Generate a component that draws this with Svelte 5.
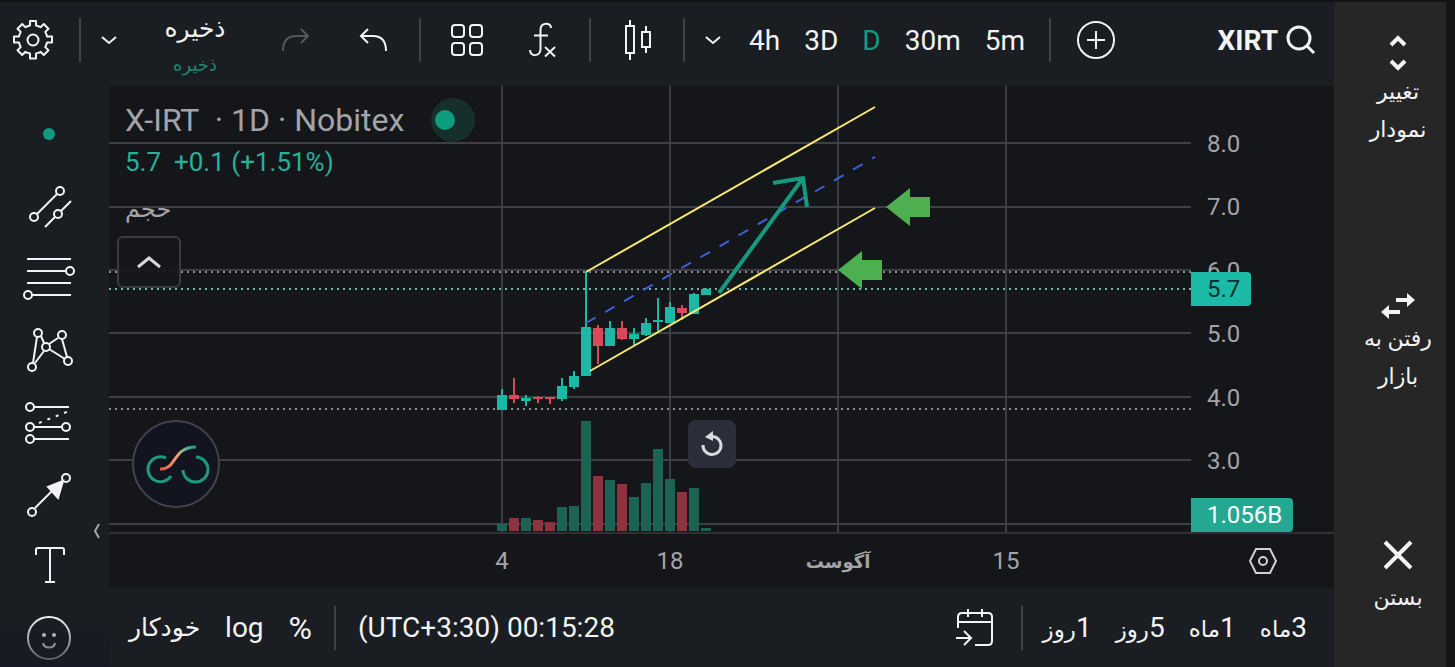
<script>
  const intervals = ['4h', '3D', 'D', '30m', '5m'];
  let activeInterval = $state('D');

  const ranges = [
    { count: 1, unit: 'روز' },
    { count: 5, unit: 'روز' },
    { count: 1, unit: 'ماه' },
    { count: 3, unit: 'ماه' }
  ];
  const prices = ['8.0', '7.0', '6.0', '5.0', '4.0', '3.0'];
  const dates = [
    { label: '4' },
    { label: '18' },
    { label: 'آگوست', month: true },
    { label: '15' }
  ];

  const gridRows = [57, 121, 184, 247, 311, 374, 438];
  const gridCols = [393, 561, 729, 897];

  // [high, body top, body bottom, low, volume top, rising]
  const candles = [
    [303, 309, 324, 324, 438, true],
    [292, 309, 313, 317, 432, false],
    [309, 312, 315, 320, 432, true],
    [310, 311, 313, 317, 434, false],
    [311, 311, 313, 318, 436, false],
    [292, 300, 313, 315, 421, true],
    [285, 290, 301, 303, 420, true],
    [186, 241, 290, 290, 335, true],
    [239, 242, 260, 278, 390, false],
    [235, 242, 260, 260, 394, true],
    [235, 242, 253, 254, 398, false],
    [242, 248, 253, 259, 411, true],
    [232, 237, 249, 250, 397, true],
    [212, 234, 236, 245, 363, true],
    [216, 221, 237, 237, 393, true],
    [219, 222, 227, 234, 406, false],
    [207, 208, 228, 228, 402, true],
    [202, 203, 209, 209, 442, true]
  ];

  let legendOpen = $state(true);
</script>

<div class="app">
  <main>
    <header>
      <button class="settings" aria-label="Settings">
        <svg width="44" height="44" viewBox="0 0 44 44">
          <path d="M19 3h6v4.500q2.500.500 4.600 1.700l3.200-3.200 4.700 4.700-3.200 3.200q1.200 2.100 1.700 4.600h5v6h-5q-.500 2.500-1.700 4.600l3.200 3.200-4.700 4.700-3.200-3.200q-2.100 1.200-4.600 1.700v5h-6v-5q-2.500-.500-4.600-1.700l-3.200 3.200-4.700-4.700 3.200-3.200q-1.200-2.100-1.700-4.600h-5v-6h5q.500-2.500 1.700-4.600l-3.200-3.200 4.700-4.700 3.200 3.200q2.100-1.200 4.600-1.700z" />
          <circle cx="22" cy="22" r="5.500" />
        </svg>
      </button>
      <span class="divider"></span>
      <button class="chevron" aria-label="Layouts">
        <svg width="18" height="10" viewBox="0 0 18 10"><path d="M2 2l7 6 7-6" /></svg>
      </button>
      <button class="save">
        <span>ذخیره</span>
        <small>ذخیره</small>
      </button>
      <button class="redo" aria-label="Redo" disabled>
        <svg width="30" height="24" viewBox="0 0 30 24"><path d="M2 23C2 13 7 8 15 8h12M20 1l7 7-7 7" /></svg>
      </button>
      <button class="undo" aria-label="Undo">
        <svg width="30" height="24" viewBox="0 0 30 24"><path d="M28 23C28 13 23 8 15 8H3M10 1L3 8l7 7" /></svg>
      </button>
      <span class="divider"></span>
      <button class="layout" aria-label="Templates">
        <svg width="34" height="34" viewBox="0 0 34 34">
          <rect x="2" y="2" width="12" height="12" rx="3" />
          <rect x="20" y="2" width="12" height="12" rx="3" />
          <rect x="2" y="20" width="12" height="12" rx="3" />
          <rect x="20" y="20" width="12" height="12" rx="3" />
        </svg>
      </button>
      <button class="indicators" aria-label="Indicators">
        <svg width="30" height="36" viewBox="0 0 30 36">
          <path d="M23 6C23 0 12.500 0 12.500 8v19c0 8-10.500 8-10.500 1M6 13.500h14M17 25l10 9.500M27 25l-10 9.500" />
        </svg>
      </button>
      <span class="divider"></span>
      <button class="candle-type" aria-label="Candles">
        <svg width="30" height="42" viewBox="0 0 30 42">
          <path d="M4 7h8v27H4zM8 1v6M8 34v7M20 13h8v15h-8zM24 7v6M24 28v6" />
        </svg>
      </button>
      <span class="divider"></span>
      <button class="chevron" aria-label="Intervals">
        <svg width="18" height="10" viewBox="0 0 18 10"><path d="M2 2l7 6 7-6" /></svg>
      </button>
      <div class="intervals">
        {#each intervals as interval}
          <button class:active={interval === activeInterval} onclick={() => (activeInterval = interval)}>{interval}</button>
        {/each}
      </div>
      <span class="divider"></span>
      <button class="compare" aria-label="Compare">
        <svg width="40" height="40" viewBox="0 0 40 40"><circle cx="20" cy="20" r="18" /><path d="M11 20h18M20 11v18" /></svg>
      </button>
      <button class="symbol">
        XIRT
        <svg width="30" height="30" viewBox="0 0 30 30"><circle cx="13" cy="13" r="11" /><path d="M21 21l7 7" /></svg>
      </button>
    </header>

    <div class="workspace">
      <nav aria-label="Drawing tools">
        <button aria-label="Cursor"><span class="dot"></span></button>
        <button aria-label="Trend lines">
          <svg width="50" height="50" viewBox="0 0 50 50">
            <path d="M13 33l20-20M21 46l10-10M37 30l10-10" />
            <circle cx="36" cy="10" r="4" />
            <circle cx="10" cy="36" r="4" />
            <circle cx="34" cy="33" r="4" />
          </svg>
        </button>
        <button aria-label="Fibonacci">
          <svg width="50" height="50" viewBox="0 0 50 50">
            <path d="M3 6h44M3 18h39M3 30h44M8 42h39" />
            <circle cx="46" cy="18" r="4" /><circle cx="4" cy="42" r="4" />
          </svg>
        </button>
        <button aria-label="Patterns">
          <svg width="50" height="50" viewBox="0 0 50 50">
            <path d="M9 38l4-26M11 38l9-12M17 11l3 7M25 19l9-6M25 24l16 10M38 14l5 18" />
            <circle cx="14" cy="8" r="4" /><circle cx="38" cy="10" r="4" /><circle cx="22" cy="22" r="4" />
            <circle cx="8" cy="42" r="4" /><circle cx="44" cy="36" r="4" />
          </svg>
        </button>
        <button aria-label="Projection">
          <svg width="50" height="50" viewBox="0 0 50 50">
            <path d="M10 10h35M10 30h28M10 42h35" />
            <path d="M15 26l30-12" stroke-dasharray="3 6" />
            <circle cx="6" cy="10" r="4" /><circle cx="6" cy="30" r="4" />
            <circle cx="42" cy="30" r="4" /><circle cx="6" cy="42" r="4" />
          </svg>
        </button>
        <button aria-label="Arrow">
          <svg width="50" height="50" viewBox="0 0 50 50">
            <path d="M11 39l20-20" />
            <path class="solid" d="M24 18l15-6-5 17z" />
            <circle cx="42" cy="9" r="4" /><circle cx="8" cy="43" r="4" />
          </svg>
        </button>
        <button aria-label="Text">
          <svg width="50" height="50" viewBox="0 0 50 50">
            <path d="M12 14V9q0-2 2-2h24q2 0 2 2v5M26 7v34M21 41h10" />
          </svg>
        </button>
        <button aria-label="Emoji">
          <svg width="50" height="50" viewBox="0 0 50 50">
            <circle cx="25" cy="25" r="21" />
            <path d="M19 30c1 6 11 6 12 0" />
            <circle class="solid" cx="20" cy="22" r="1" /><circle class="solid" cx="30" cy="22" r="1" />
          </svg>
        </button>
        <button class="hide-tools" aria-label="Hide tools">
          <svg width="8" height="18" viewBox="0 0 8 18"><path d="M6 2L2 9l4 7" /></svg>
        </button>
      </nav>

      <div class="content">
        <section class="chart">
          <div class="plot">
            <svg class="canvas" viewBox="0 0 1082 446" preserveAspectRatio="xMidYMid slice">
              <g class="grid">
                {#each gridRows as y}
                  <line x1="0" x2="1082" y1={y} y2={y} />
                {/each}
                {#each gridCols as x}
                  <line x1={x} x2={x} y1="0" y2="446" />
                {/each}
              </g>
              {#each candles as [high, top, bottom, low, volume, rising], i}
                <rect class="volume" class:rising x={388 + i * 12} y={volume} width="10" height={445 - volume} />
              {/each}
              <g class="levels">
                <line x1="0" x2="1082" y1="186" y2="186" />
                <line class="last" x1="0" x2="1082" y1="203" y2="203" />
                <line x1="0" x2="1082" y1="323" y2="323" />
              </g>
              {#each candles as [high, top, bottom, low, volume, rising], i}
                <g class="candle" class:rising>
                  <rect x={392 + i * 12} y={high} width="2" height={low - high} />
                  <rect x={388 + i * 12} y={top} width="10" height={bottom - top} />
                </g>
              {/each}
              <g class="channel">
                <path d="M477 186L766 21M481 285L766 122" />
                <path class="middle" d="M477 237L766 71" />
              </g>
              <path class="forecast" d="M610 207L694 92M664 97l30-5 4 29" />
              <g class="marks">
                <path d="M777 121l24-19v9h20v20h-20v9z" />
                <path d="M729 184l24-19v9h20v20h-20v9z" />
              </g>
            </svg>

            <div class="legend">
              <h1>X-IRT &nbsp;· 1D · Nobitex <span class="status"></span></h1>
              <p class="change">5.7 &nbsp;+0.1 (+1.51%)</p>
              <p class="study">حجم</p>
              <button aria-label="Toggle legend" aria-expanded={legendOpen} onclick={() => (legendOpen = !legendOpen)}>
                <svg width="26" height="14" viewBox="0 0 26 14"><path d="M2 12l11-9 11 9" /></svg>
              </button>
            </div>

            <a class="logo" href="#nobitex" aria-label="Nobitex">
              <svg width="84" height="84" viewBox="0 0 84 84">
                <defs>
                  <linearGradient id="wave">
                    <stop offset="0" stop-color="#e0554a" />
                    <stop offset="0.500" stop-color="#f0a070" />
                    <stop offset="0.700" stop-color="#5fb598" />
                    <stop offset="1" stop-color="#189a7c" />
                  </linearGradient>
                </defs>
                <path d="M32 36A12.500 12.500 0 1 0 37 54" />
                <path d="M62 35A12.500 12.500 0 1 1 49 48" />
                <path d="M26 47C43 48 38 25 62 25" stroke="url(#wave)" />
              </svg>
            </a>

            <button class="reset" aria-label="Reset chart">
              <svg width="24" height="28" viewBox="0 0 24 28">
                <path d="M3 15a9 9 0 1 0 9-8.500" />
                <path class="solid" d="M13 1v10L5 7z" />
              </svg>
            </button>
          </div>

          <div class="price-axis">
            {#each prices as price}
              <span>{price}</span>
            {/each}
            <strong class="last-price">5.7</strong>
            <strong class="last-volume">1.056B</strong>
          </div>

          <div class="time-axis">
            {#each dates as date}
              <span class:month={date.month}>{date.label}</span>
            {/each}
          </div>
          <button class="axis-settings" aria-label="Axis settings">
            <svg width="30" height="28" viewBox="0 0 30 28"><path d="M8 2h14l6 12-6 12H8L2 14z" /><circle cx="15" cy="14" r="4" /></svg>
          </button>
        </section>

        <footer>
          <button class="auto">خودکار</button>
          <button>log</button>
          <button class="percent">%</button>
          <span class="divider"></span>
          <button>(UTC+3:30) 00:15:28</button>
          <div class="ranges">
            <button aria-label="Go to date">
              <svg width="40" height="40" viewBox="0 0 40 40">
                <path d="M3 20V9q0-4 4-4h26q4 0 4 4v24q0 4-4 4H20M3 14h34M13 1v8M27 1v8M1 30h15M9 23l7 7-7 7" />
              </svg>
            </button>
            <span class="divider"></span>
            {#each ranges as range}
              <button class="range" dir="rtl">{range.count}<span>{range.unit}</span></button>
            {/each}
          </div>
        </footer>
      </div>
    </div>
  </main>

  <aside>
    <button dir="rtl">
      <svg width="20" height="38" viewBox="0 0 20 38"><path d="M3 10l7-7 7 7M3 26l7 7 7-7" /></svg>
      تغییر نمودار
    </button>
    <button dir="rtl">
      <svg width="36" height="28" viewBox="0 0 36 28">
        <path d="M16 8h12M20 20H8" />
        <path class="solid" d="M27 1l8 7-8 7zM9 13l-8 7 8 7z" />
      </svg>
      رفتن به بازار
    </button>
    <button dir="rtl">
      <svg width="32" height="40" viewBox="0 0 32 40"><path d="M3 3l26 26M29 3L3 29" /></svg>
      بستن
    </button>
  </aside>
</div>

<style>
  :global(body) {
    margin: 0;
    background: #131416;
  }

  .app {
    display: flex;
    box-sizing: border-box;
    height: 100vh;
    min-height: 640px;
    padding: 2px 9px 0 0;
    overflow: hidden;
    color: #f2f3f5;
    font-family: Roboto, 'DejaVu Sans', sans-serif;
    font-size: 28px;
  }

  button {
    display: flex;
    align-items: center;
    justify-content: center;
    flex-shrink: 0;
    padding: 0;
    border: none;
    background: none;
    color: inherit;
    font: inherit;
    white-space: nowrap;
    cursor: pointer;
  }

  svg {
    display: block;
    overflow: visible;
    fill: none;
    stroke: currentColor;
    stroke-width: 2;
  }

  .solid {
    fill: currentColor;
  }

  main {
    display: flex;
    flex-direction: column;
    flex: 1;
    min-width: 0;
    background: #1a1d21;
  }

  header {
    display: flex;
    align-items: center;
    height: 84px;
    padding-bottom: 8px;
    box-sizing: border-box;
  }

  .divider {
    flex-shrink: 0;
    width: 2px;
    height: 44px;
    background: #3f4147;
  }

  .settings {
    width: 66px;
    margin-right: 13px;
  }

  .settings svg {
    stroke-linejoin: round;
  }

  .chevron {
    width: 56px;
  }

  .save {
    flex-direction: column;
    gap: 8px;
    box-sizing: border-box;
    width: 116px;
    height: 76px;
    padding-top: 10px;
    font-size: 25px;
    line-height: 32px;
  }

  .save small {
    color: #168a74;
    font-size: 18px;
    line-height: 24px;
  }

  .redo {
    width: 86px;
    color: #55575c;
  }

  .undo {
    width: 68px;
    margin-right: 12px;
  }

  .layout {
    width: 92px;
  }

  .indicators {
    width: 60px;
    margin-right: 16px;
  }

  .candle-type {
    width: 92px;
  }

  .intervals {
    display: flex;
    gap: 24px;
    padding: 0 24px 0 8px;
  }

  .active {
    color: #109c82;
  }

  .compare {
    width: 90px;
  }

  .symbol {
    gap: 8px;
    margin-left: auto;
    padding-right: 18px;
    font-weight: 700;
  }

  .symbol svg {
    stroke-width: 3;
  }

  .workspace {
    display: flex;
    flex: 1;
    min-height: 0;
  }

  nav {
    position: relative;
    width: 109px;
    padding-top: 12px;
    box-sizing: border-box;
    overflow: hidden;
  }

  nav::after {
    position: absolute;
    inset: auto 0 0;
    height: 50px;
    background: linear-gradient(transparent, #161925cc);
    content: '';
    pointer-events: none;
  }

  nav button {
    width: 98px;
    height: 72px;
  }

  .dot {
    width: 12px;
    height: 12px;
    border-radius: 50%;
    background: #0f9b80;
  }

  .hide-tools {
    position: absolute;
    right: 8px;
    bottom: 124px;
    width: 8px;
    height: 24px;
    color: #a5a7ab;
  }

  .content {
    display: flex;
    flex-direction: column;
    flex: 1;
    min-width: 0;
  }

  .chart {
    display: grid;
    grid-template: 1fr 56px / 1fr 143px;
    flex: 1;
    min-height: 0;
    background: #15161a;
    color: #a3a4a9;
    font-size: 24px;
  }

  .plot {
    position: relative;
    min-width: 0;
    min-height: 0;
  }

  .canvas {
    position: absolute;
    width: 100%;
    height: 100%;
    overflow: hidden;
    stroke: none;
  }

  .grid {
    stroke: #3e3f44;
  }

  .volume {
    fill: #8b3440;
  }

  .volume.rising {
    fill: #1d6354;
  }

  .candle {
    fill: #d64a5c;
  }

  .candle.rising {
    fill: #1bb9a5;
  }

  .levels {
    stroke: #8c8d92;
    stroke-dasharray: 2 4;
  }

  .levels .last {
    stroke: #6fb8a8;
  }

  .channel {
    stroke: #f7ea6e;
  }

  .middle {
    stroke: #3a5fd9;
    stroke-dasharray: 11 11;
  }

  .forecast {
    stroke: #159a80;
    stroke-width: 4;
  }

  .marks {
    fill: #4caf50;
  }

  .legend {
    position: absolute;
    top: 12px;
    left: 16px;
  }

  h1 {
    display: flex;
    align-items: center;
    margin: 0;
    font-size: 32px;
    font-weight: 400;
    line-height: 44px;
  }

  .status {
    display: flex;
    align-items: center;
    width: 40px;
    height: 44px;
    margin-left: 27px;
    padding-left: 4px;
    border-radius: 50%;
    background: #172f2b;
  }

  .status::before {
    width: 20px;
    height: 20px;
    border-radius: 50%;
    background: #0f9b80;
    content: '';
  }

  .legend p {
    margin: 0;
    line-height: 40px;
  }

  .legend .change {
    color: #24b29c;
    font-size: 26px;
  }

  .legend .study {
    font-size: 24px;
    line-height: 54px;
  }

  .legend button {
    width: 64px;
    height: 52px;
    margin-left: -8px;
    border: 2px solid #3a3b3f;
    border-radius: 6px;
    background: #15161ae6;
    color: #d6d7da;
  }

  .legend button svg {
    stroke-width: 3;
  }

  .logo {
    position: absolute;
    bottom: 24px;
    left: 23px;
    border: 2px solid #42434b;
    border-radius: 50%;
    background: #121520;
    color: #1b9a80;
  }

  .logo svg {
    stroke-width: 3;
  }

  .reset {
    position: absolute;
    bottom: 64px;
    left: 579px;
    width: 48px;
    height: 48px;
    border-radius: 8px;
    background: #2b2d38;
    color: #d9dade;
  }

  .reset svg {
    stroke-width: 3;
  }

  .reset .solid {
    stroke: none;
  }

  .price-axis {
    position: relative;
    display: flex;
    flex-direction: column;
    padding: 26px 0 39px 16px;
  }

  .price-axis span {
    display: flex;
    align-items: center;
    flex: 1;
  }

  .price-axis strong {
    position: absolute;
    left: 0;
    padding: 0 11px 0 16px;
    border-radius: 0 4px 4px 0;
    font-weight: 400;
    line-height: 34px;
  }

  .last-price {
    top: 186px;
    background: #1abaa6;
    color: #12302e;
  }

  .last-volume {
    bottom: 0;
    background: #24a892;
    color: #ffffff;
  }

  .time-axis {
    display: flex;
    align-items: center;
    padding-left: 309px;
    border-top: 2px solid #2e3035;
  }

  .time-axis span {
    width: 168px;
    text-align: center;
  }

  .time-axis .month {
    font-size: 18px;
    font-weight: 700;
  }

  .axis-settings {
    border-top: 2px solid #2e3035;
    color: #d0d1d5;
  }

  footer {
    display: flex;
    align-items: center;
    gap: 25px;
    height: 79px;
    padding: 0 27px 0 20px;
  }

  footer .divider {
    margin: 0 -3px;
  }

  .auto {
    font-size: 25px;
  }

  .percent {
    font-size: 32px;
  }

  .ranges {
    display: flex;
    align-items: center;
    gap: 24px;
    margin-left: auto;
  }

  .ranges .divider {
    margin: 0 -4px 0 2px;
  }

  .range {
    align-items: baseline;
  }

  .range span {
    font-size: 23px;
  }

  aside {
    display: flex;
    flex-direction: column;
    justify-content: space-between;
    box-sizing: border-box;
    width: 112px;
    padding: 33px 0 50px 16px;
    background: #262626;
  }

  aside button {
    flex-direction: column;
    width: 80px;
    margin: 0 auto;
    font-size: 22px;
    line-height: 38px;
    white-space: normal;
  }

  aside svg {
    stroke-width: 4;
  }

  aside .solid {
    stroke: none;
  }
</style>
